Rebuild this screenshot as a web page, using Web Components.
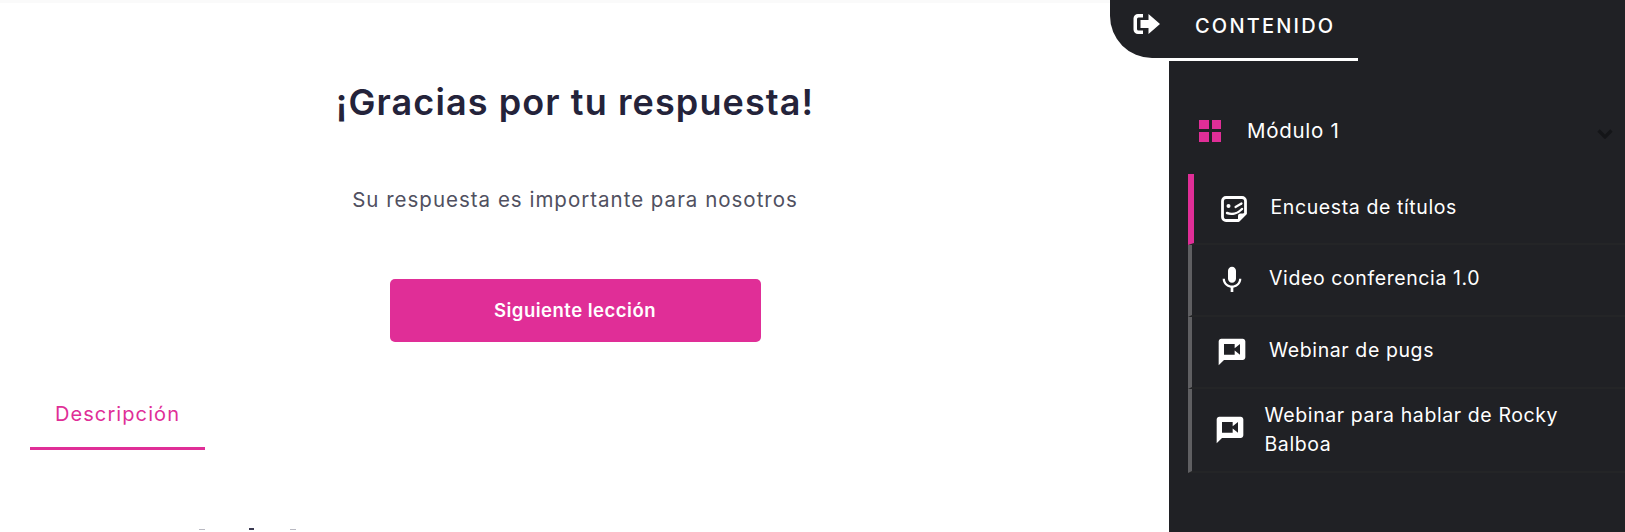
<!DOCTYPE html>
<html lang="es">
<head>
<meta charset="utf-8">
<title>Lección</title>
<style>
html, body { margin: 0; height: 532px; overflow: hidden; background: #fff; font-family: Inter, "Liberation Sans", sans-serif; }
</style>
</head>
<body>
<course-player>
	<lesson-main>
		<thanks-panel heading="¡Gracias por tu respuesta!" text="Su respuesta es importante para nosotros" action="Siguiente lección"></thanks-panel>
		<lesson-tabs label="Descripción"></lesson-tabs>
		<lesson-desc></lesson-desc>
	</lesson-main>
	<course-sidebar>
		<course-module title="Módulo 1">
			<course-item icon="sticker" active>Encuesta de títulos</course-item>
			<course-item icon="mic">Video conferencia 1.0</course-item>
			<course-item icon="video">Webinar de pugs</course-item>
			<course-item icon="video" tall>Webinar para hablar de Rocky Balboa</course-item>
		</course-module>
	</course-sidebar>
</course-player>
<script>
const FONT = 'Inter, "Liberation Sans", sans-serif';
const PINK = '#e02e97';

const ICONS = {
	sticker: `<svg viewBox="0 0 28 28" width="28" height="28"><path fill="none" stroke="#fff" stroke-width="2.800" stroke-linejoin="round" d="M6 2.500h16a3.500 3.500 0 0 1 3.500 3.500v12.500l-7 7H6A3.500 3.500 0 0 1 2.500 22V6A3.500 3.500 0 0 1 6 2.500z"/><path fill="#fff" d="M18 25.500v-4.500a2.500 2.500 0 0 1 2.500-2.500h5z"/><path fill="none" stroke="#fff" stroke-width="2.400" stroke-linecap="round" d="M7 18c5 1.800 11 .3 15-4"/><circle cx="8.500" cy="11" r="2" fill="#fff"/><path fill="none" stroke="#fff" stroke-width="2.200" stroke-linecap="round" d="M15.500 12l6-3.500"/></svg>`,
	mic: `<svg viewBox="0 0 24 24" width="32" height="32"><path fill="#fff" d="M12 14c1.660 0 2.990-1.340 2.990-3L15 5c0-1.660-1.340-3-3-3S9 3.340 9 5v6c0 1.660 1.340 3 3 3zm5.300-3c0 3-2.540 5.100-5.300 5.100S6.700 14 6.700 11H5c0 3.410 2.720 6.230 6 6.720V21h2v-3.280c3.280-.48 6-3.300 6-6.720h-1.700z"/></svg>`,
	video: `<svg viewBox="0 0 24 24" width="32" height="32"><path fill="#fff" d="M20 2H4c-1.100 0-1.990.9-1.990 2L2 22l4-4h14c1.100 0 2-.9 2-2V4c0-1.100-.9-2-2-2zm-2 12l-4-3.200V14H6V6h8v3.200L18 6v8z"/></svg>`
};

customElements.define('course-player', class extends HTMLElement {
	connectedCallback() {
		this.attachShadow({mode: 'open'}).innerHTML = `
		<style>
		:host { display:flex; width:1625px; height:532px; overflow:hidden; }
		::slotted(lesson-main) { flex:1; min-width:0; }
		</style>
		<slot></slot>`;
	}
});

customElements.define('lesson-main', class extends HTMLElement {
	connectedCallback() {
		this.attachShadow({mode: 'open'}).innerHTML = `
		<style>
		:host {
			display:block;
			box-sizing:border-box;
			height:532px;
			overflow:hidden;
			border-top:3px solid #fafafa;
			background:#fff;
		}
		</style>
		<slot></slot>`;
	}
});

customElements.define('thanks-panel', class extends HTMLElement {
	connectedCallback() {
		this.attachShadow({mode: 'open'}).innerHTML = `
		<style>
		:host { display:flex; flex-direction:column; align-items:center; padding:77px 19px 0 0; font-family:${FONT}; }
		h1 { margin:0; font-size:36px; line-height:44px; font-weight:600; color:#24233a; letter-spacing:1.1px; }
		p { margin:62px 0 0; font-size:20.500px; line-height:28px; color:#505060; letter-spacing:1px; }
		button {
			margin-top:65px;
			width:371px;
			height:63px;
			padding:0 0 2px;
			border:0;
			border-radius:5px;
			background:${PINK};
			color:#fff;
			font:600 18.500px ${FONT};
			letter-spacing:.5px;
		}
		</style>
		<h1></h1>
		<p></p>
		<button type="button"></button>`;
		this.shadowRoot.querySelector('h1').textContent = this.getAttribute('heading');
		this.shadowRoot.querySelector('p').textContent = this.getAttribute('text');
		this.shadowRoot.querySelector('button').textContent = this.getAttribute('action');
	}
});

customElements.define('lesson-tabs', class extends HTMLElement {
	connectedCallback() {
		this.attachShadow({mode: 'open'}).innerHTML = `
		<style>
		:host { display:block; padding:38px 0 0 30px; font-family:${FONT}; }
		div {
			box-sizing:border-box;
			width:175px;
			height:70px;
			padding-top:20px;
			text-align:center;
			font-size:20px;
			line-height:28px;
			color:${PINK};
			letter-spacing:1.1px;
			border-bottom:3px solid ${PINK};
		}
		</style>
		<div></div>`;
		this.shadowRoot.querySelector('div').textContent = this.getAttribute('label');
	}
});

// only the top pixels of the description show above the fold, not readable as text
customElements.define('lesson-desc', class extends HTMLElement {
	connectedCallback() {
		this.attachShadow({mode: 'open'}).innerHTML = `
		<style>
		:host { display:flex; align-items:flex-end; height:2px; padding:78px 0 0 199px; }
		i { display:block; width:6px; height:1px; background:#b9b9c2; }
		i.accent { width:5px; height:2px; margin:0 36px 0 44px; background:#3a3950; }
		</style>
		<i></i><i class="accent"></i><i></i>`;
	}
});

customElements.define('course-sidebar', class extends HTMLElement {
	connectedCallback() {
		this.attachShadow({mode: 'open'}).innerHTML = `
		<style>
		:host { display:block; position:relative; flex:none; width:456px; height:532px; background:#202125; font-family:${FONT}; }
		.head {
			display:flex;
			height:61px;
		}
		.tab {
			box-sizing:border-box;
			width:189px;
			height:61px;
			padding:8px 0 0 26px;
			border-bottom:3px solid #fff;
			font-size:20px;
			line-height:36px;
			font-weight:500;
			letter-spacing:2.2px;
			color:#fff;
		}
		.exit {
			position:absolute;
			left:-59px;
			top:0;
			width:59px;
			height:58px;
			background:#202125;
			border-bottom-left-radius:42px;
		}
		.exit svg { position:absolute; left:23px; top:13px; }
		</style>
		<div class="exit">
			<svg viewBox="0 0 27 22" width="27" height="22"><path fill="#fff" d="M.5 5.500A4.500 4.500 0 0 1 5 1h5v3.500H5.500A1.500 1.500 0 0 0 4 6v10a1.500 1.500 0 0 0 1.500 1.500H10V21H5a4.500 4.500 0 0 1-4.500-4.500z"/><path fill="#fff" d="M15.500 1 27 11 15.500 21v-6H7.500V7h8z"/></svg>
		</div>
		<div class="head"><div class="tab">CONTENIDO</div></div>
		<slot></slot>`;
	}
});

customElements.define('course-module', class extends HTMLElement {
	connectedCallback() {
		this.attachShadow({mode: 'open'}).innerHTML = `
		<style>
		:host { display:block; }
		.title {
			display:flex;
			align-items:center;
			height:113px;
			padding:26px 0 0 30px;
			box-sizing:border-box;
			color:#fff;
			font-size:20.500px;
			font-weight:400;
			letter-spacing:.7px;
		}
		.grid { display:grid; grid-template-columns:9.500px 9.500px; gap:3px; margin-right:26px; }
		.grid i { display:block; height:9.500px; background:${PINK}; }
		.name { flex:1; }
		.chev { margin-right:12px; margin-top:7px; }
		.items { margin-left:19px; }
		</style>
		<div class="title">
			<span class="grid"><i></i><i></i><i></i><i></i></span>
			<span class="name"></span>
			<svg class="chev" viewBox="0 0 16 10" width="16" height="10"><path fill="none" stroke="#141518" stroke-width="3.200" d="M1.500 1.500 8 8l6.500-6.500"/></svg>
		</div>
		<div class="items"><slot></slot></div>`;
		this.shadowRoot.querySelector('.name').textContent = this.getAttribute('title');
		this.removeAttribute('title');
	}
});

customElements.define('course-item', class extends HTMLElement {
	connectedCallback() {
		this.attachShadow({mode: 'open'}).innerHTML = `
		<style>
		:host {
			display:block;
			box-sizing:border-box;
			border-left:4px solid #5f5f62;
			border-bottom:2px solid #242527;
			height:72px;
			color:#fff;
			font-size:19.500px;
			font-weight:400;
			letter-spacing:.6px;
			line-height:29px;
		}
		:host([active]) { border-left:6px solid ${PINK}; height:71px; }
		:host([tall]) { height:84px; }
		.row { display:flex; align-items:center; height:100%; padding-left:21px; }
		.ic { flex:none; display:flex; align-items:center; justify-content:center; width:38px; margin-right:18px; }
		.label { width:310px; margin-top:-3px; }
		:host([active]) .ic { margin-right:17.500px; }
		:host([tall]) .row { padding-left:19px; }
		:host([tall]) .ic { margin-right:15.500px; }
		:host([tall]) .label { margin-top:0; }
		</style>
		<div class="row">
			<span class="ic"></span>
			<span class="label"><slot></slot></span>
		</div>`;
		this.shadowRoot.querySelector('.ic').innerHTML = ICONS[this.getAttribute('icon')];
	}
});
</script>
</body>
</html>
